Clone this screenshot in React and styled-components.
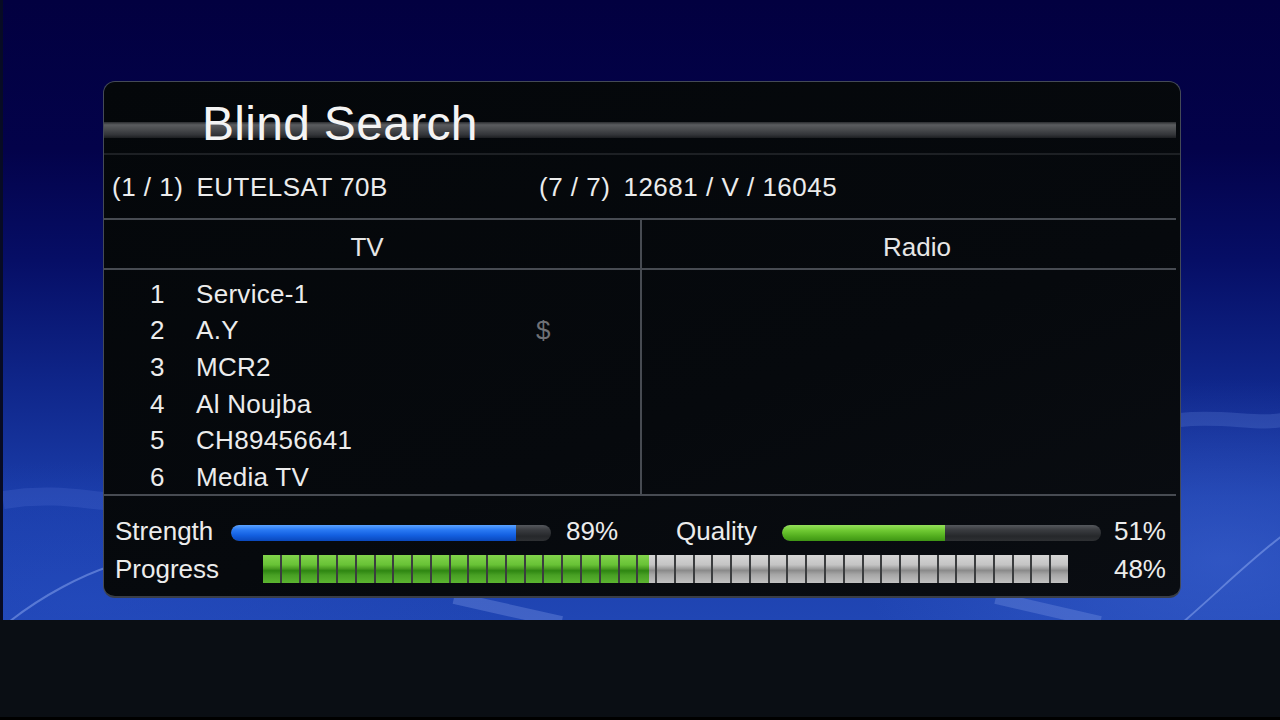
import React from "react";
import styled, { createGlobalStyle } from "styled-components";

const GlobalStyle = createGlobalStyle`
  html, body {
    margin: 0;
    padding: 0;
    background: #0a0e14;
  }
  body {
    font-family: "Liberation Sans", Arial, sans-serif;
    color: #ececec;
  }
  * { box-sizing: border-box; }
`;

const Page = styled.div`
  width: 1280px;
  height: 720px;
  display: flex;
  flex-direction: column;
  overflow: hidden;
`;

const Stage = styled.div`
  position: relative;
  height: 620px;
  padding: 81px 0 0 103px;
  border-left: 3px solid #070b24;
  background:
    radial-gradient(ellipse 520px 260px at 1220px 560px, rgba(70, 110, 220, 0.45), transparent 70%),
    radial-gradient(ellipse 600px 200px at 80px 600px, rgba(40, 80, 200, 0.35), transparent 70%),
    linear-gradient(180deg, #020040 0%, #03024a 24%, #060e66 42%, #0f268a 62%, #1a3ca8 80%, #2046b4 100%);
  overflow: hidden;
`;

const Decor = styled.svg`
  position: absolute;
  inset: 0;
  width: 100%;
  height: 100%;
  pointer-events: none;
`;

const Bottom = styled.div`
  flex: 1;
  background: #0a0e14;
  border-bottom: 3px solid #000;
`;

const Panel = styled.div`
  position: relative;
  z-index: 1;
  margin-left: -3px;
  width: 1078px;
  height: 517px;
  border: 1px solid #444a56;
  border-bottom: 2px solid #3a3e46;
  border-radius: 12px;
  background: linear-gradient(160deg, #04070a 0%, #06090d 60%, #0a0d12 100%);
  display: flex;
  flex-direction: column;
  overflow: hidden;
`;

const TitleBar = styled.div`
  position: relative;
  height: 73px;
  border-bottom: 2px solid #1d2024;
  &::before {
    content: "";
    position: absolute;
    left: 0;
    right: 4px;
    top: 40px;
    height: 16px;
    background: linear-gradient(180deg, #2a2c2f 0%, #5a5c5f 18%, #4a4c4f 45%, #323438 80%, #1c1e21 100%);
  }
`;

const Title = styled.h1`
  position: relative;
  margin: 18px 0 0 98px;
  font-size: 48px;
  line-height: 48px;
  font-weight: normal;
  color: #f4f4f4;
  letter-spacing: 0.3px;
`;

const InfoRow = styled.div`
  height: 63px;
  display: grid;
  grid-template-columns: 427px auto;
  align-items: center;
  padding-left: 8px;
  padding-top: 2px;
  font-size: 26px;
  letter-spacing: 0.5px;
`;

const InfoGroup = styled.div`
  display: flex;
  gap: 13px;
  white-space: nowrap;
`;

const HLine = styled.div`
  height: 2px;
  margin-right: 4px;
  background: #474b52;
  flex: none;
`;

const TableGrid = styled.div`
  display: grid;
  grid-template-columns: 536px 2px 1fr;
  margin-right: 4px;
  height: ${(p) => p.$h}px;
  flex: none;
`;

const VLine = styled.div`
  background: #474b52;
`;

const HeadCell = styled.div`
  display: flex;
  align-items: center;
  justify-content: center;
  font-size: 26px;
  color: #e6e6e6;
  padding-top: 7px;
  padding-left: ${(p) => p.$pl || 0}px;
  padding-right: ${(p) => p.$pr || 0}px;
`;

const List = styled.div`
  padding-top: 6px;
`;

const ListRow = styled.div`
  display: grid;
  grid-template-columns: 46px 340px auto;
  align-items: center;
  height: 36.6px;
  padding-left: 46px;
  font-size: 26px;
  letter-spacing: 0.3px;
  color: #ececec;
`;

const Flag = styled.span`
  color: #6f7176;
  font-size: 26px;
`;

const Signal = styled.div`
  flex: 1;
  padding-top: 17px;
  display: flex;
  flex-direction: column;
  gap: 2px;
`;

const MeterRow = styled.div`
  display: grid;
  grid-template-columns: ${(p) => p.$cols};
  align-items: center;
  height: 36px;
  padding-left: 11px;
  padding-right: 14px;
  font-size: 26px;
  color: #ececec;
  white-space: nowrap;
`;

const Value = styled.span`
  text-align: ${(p) => (p.$right ? "right" : "left")};
  padding-left: ${(p) => p.$pl || 0}px;
`;

const Track = styled.div`
  height: 16px;
  margin-top: 3px;
  border-radius: 8px;
  background: linear-gradient(180deg, #55585d 0%, #3a3c40 30%, #26282b 70%, #2e3033 100%);
  overflow: hidden;
  display: flex;
`;

const Fill = styled.div`
  height: 100%;
  border-radius: 8px 0 0 8px;
  background: ${(p) =>
    p.$tone === "blue"
      ? "linear-gradient(180deg, #5aa2ff 0%, #2a7af4 30%, #135fe0 65%, #0a48bc 100%)"
      : "linear-gradient(180deg, #94e05a 0%, #6ec832 35%, #52ad1e 70%, #3e9414 100%)"};
`;

const Segments = styled.div`
  height: 28px;
  display: flex;
  gap: 2px;
  background: #3b3d3f;
`;

const Cell = styled.div`
  flex: 1;
  height: 100%;
  display: flex;
  background: linear-gradient(180deg, #d6d6d6 0%, #c4c4c4 35%, #a0a0a0 48%, #8a8a8a 55%, #a6a6a6 70%, #c2c2c2 100%);
`;

const CellFill = styled.div`
  height: 100%;
  background: linear-gradient(180deg, #82d44c 0%, #68c236 35%, #4a9e22 48%, #2e8612 56%, #48a024 72%, #5cb530 100%);
`;

const channels = [
  { n: 1, name: "Service-1" },
  { n: 2, name: "A.Y", flag: "$" },
  { n: 3, name: "MCR2" },
  { n: 4, name: "Al Noujba" },
  { n: 5, name: "CH89456641" },
  { n: 6, name: "Media TV" },
];

const SEGMENTS = 43;

function SegmentBar({ percent }) {
  const filled = (percent / 100) * SEGMENTS;
  return (
    <Segments>
      {Array.from({ length: SEGMENTS }, (_, i) => {
        const f = Math.max(0, Math.min(1, filled - i));
        return (
          <Cell key={i}>
            <CellFill style={{ width: `${f * 100}%` }} />
          </Cell>
        );
      })}
    </Segments>
  );
}

function Meter({ percent, tone }) {
  return (
    <Track>
      <Fill $tone={tone} style={{ width: `${percent}%` }} />
    </Track>
  );
}

export default function App() {
  return (
    <Page>
      <GlobalStyle />
      <Stage>
        <Decor viewBox="0 0 1280 620" preserveAspectRatio="none">
          <path d="M0 500 C 60 490, 100 505, 110 500" stroke="rgba(120,150,240,0.15)" strokeWidth="18" fill="none" />
          <path d="M6 622 C 40 595, 80 575, 108 566" stroke="rgba(170,195,255,0.4)" strokeWidth="2" fill="none" />
          <path d="M1183 622 C 1220 590, 1250 560, 1282 536" stroke="rgba(170,195,255,0.4)" strokeWidth="2" fill="none" />
          <path d="M1180 420 C 1220 415, 1260 425, 1282 420" stroke="rgba(140,170,250,0.18)" strokeWidth="14" fill="none" />
          <path d="M452 598 L 560 622" stroke="rgba(150,175,245,0.28)" strokeWidth="12" fill="none" />
          <path d="M995 598 L 1100 622" stroke="rgba(150,175,245,0.25)" strokeWidth="12" fill="none" />
        </Decor>
        <Panel>
          <TitleBar>
            <Title>Blind Search</Title>
          </TitleBar>
          <InfoRow>
            <InfoGroup>
              <span>(1 / 1)</span>
              <span>EUTELSAT 70B</span>
            </InfoGroup>
            <InfoGroup>
              <span>(7 / 7)</span>
              <span>12681 / V / 16045</span>
            </InfoGroup>
          </InfoRow>
          <HLine />
          <TableGrid $h={48}>
            <HeadCell $pr={10}>TV</HeadCell>
            <VLine />
            <HeadCell $pl={16}>Radio</HeadCell>
          </TableGrid>
          <HLine />
          <TableGrid $h={224}>
            <List>
              {channels.map((c) => (
                <ListRow key={c.n}>
                  <span>{c.n}</span>
                  <span>{c.name}</span>
                  <Flag>{c.flag || ""}</Flag>
                </ListRow>
              ))}
            </List>
            <VLine />
            <List />
          </TableGrid>
          <HLine />
          <Signal>
            <MeterRow $cols="116px 320px 125px 106px 319px 1fr">
              <span>Strength</span>
              <Meter percent={89} tone="blue" />
              <Value $pl={15}>89%</Value>
              <span>Quality</span>
              <Meter percent={51} tone="green" />
              <Value $right>51%</Value>
            </MeterRow>
            <MeterRow $cols="148px 805px 1fr">
              <span>Progress</span>
              <SegmentBar percent={48} />
              <Value $right>48%</Value>
            </MeterRow>
          </Signal>
        </Panel>
      </Stage>
      <Bottom />
    </Page>
  );
}
